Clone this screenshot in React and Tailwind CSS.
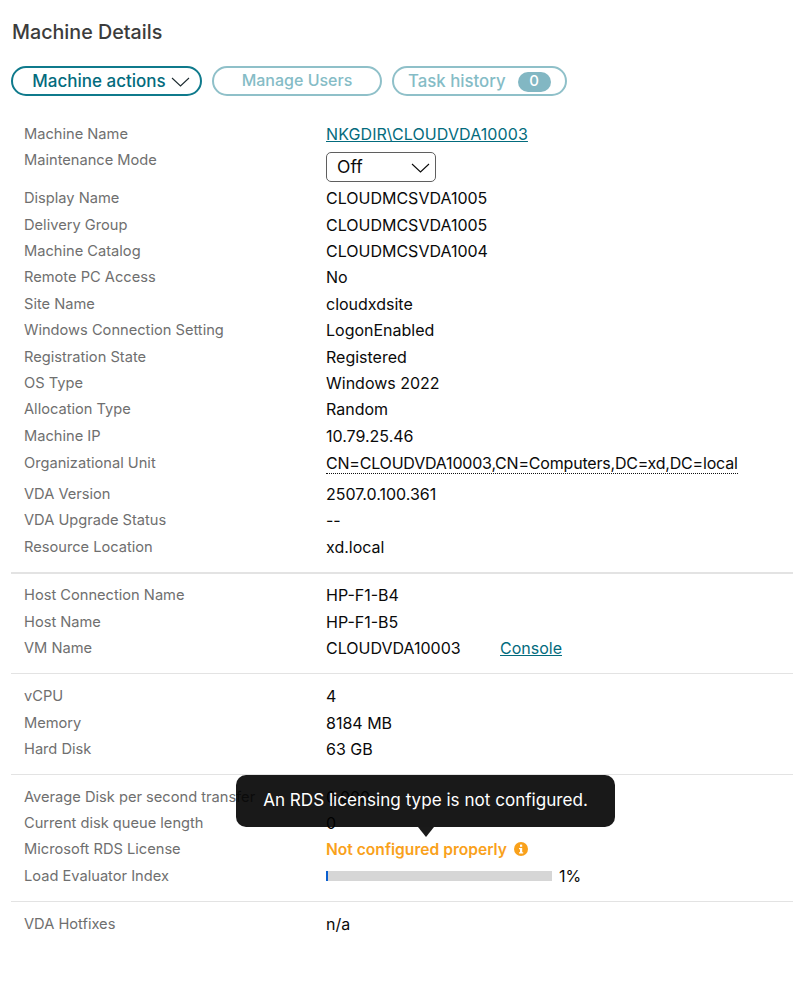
import React from "react";

const Row = ({ label, children, className = "h-[26.4px]" }) => (
  <div className={`flex items-center ${className}`}>
    <div className="w-[302px] shrink-0 pt-[2px] text-[14.65px] text-[#6f6f6f] whitespace-nowrap">{label}</div>
    <div className="text-[16px] text-[#0a0a0a] whitespace-nowrap flex items-center">{children}</div>
  </div>
);

const Section = ({ children, className = "" }) => (
  <div className={`pl-[13px] border-[#e3e3e3] ${className}`}>{children}</div>
);

const Chevron = ({ w = 19, h = 10, className = "" }) => (
  <svg width={w} height={h} viewBox="0 0 19 10" fill="none" className={className}>
    <path d="M1 1l8.5 8L18 1" stroke="currentColor" strokeWidth="1.1" />
  </svg>
);

export default function App() {
  return (
    <div className="w-[793px] h-[1004px] bg-white pl-[11px] overflow-hidden" style={{ fontFamily: "Inter, 'Liberation Sans', sans-serif" }}>
      <h1 className="pt-[20px] h-[66px] pl-[1px] text-[19.7px] leading-[24px] font-medium text-[#3c3c3c]">Machine Details</h1>

      <div className="flex gap-[10px] h-[30px]">
        <button className="w-[191px] h-[30px] rounded-full border-2 border-[#0f7a8c] text-[#036b7d] text-[17px] font-medium flex items-center justify-center gap-[5px] pl-[9px] pt-[1px]">
          Machine actions <Chevron className="text-[#1d2b30] mt-[1px]" />
        </button>
        <button className="w-[170px] h-[30px] rounded-full border-2 border-[#8fc0c9] text-[#85bcc6] text-[16px] font-medium pb-[3px]">Manage Users</button>
        <button className="w-[175px] h-[30px] rounded-full border-2 border-[#8fc0c9] text-[#85bcc6] text-[16.8px] font-medium flex items-center pl-[14px] pt-[1px]">
          Task history
          <span className="ml-[12px] w-[33px] h-[20px] rounded-full bg-[#82b7c3] text-white text-[15px] flex items-center justify-center">0</span>
        </button>
      </div>

      <Section className="pt-[25px] pb-[12px] border-b-2">
        <Row label="Machine Name"><a className="underline text-[#036b7d] tracking-[0.1px]">NKGDIR\CLOUDVDA10003</a></Row>
        <div className="flex h-[37.6px]">
          <div className="w-[302px] shrink-0 pt-[2px] text-[14.65px] text-[#6f6f6f] h-[26px] flex items-center">Maintenance Mode</div>
          <div className="mt-[5px] w-[110px] h-[30px] border border-[#5f5f5f] rounded-[5px] flex items-center justify-between pl-[10px] pr-[5px] text-[17.5px] text-[#0a0a0a]">
            Off <Chevron className="mt-[1px]" />
          </div>
        </div>
        <Row label="Display Name">CLOUDMCSVDA1005</Row>
        <Row label="Delivery Group">CLOUDMCSVDA1005</Row>
        <Row label="Machine Catalog">CLOUDMCSVDA1004</Row>
        <Row label="Remote PC Access">No</Row>
        <Row label="Site Name">cloudxdsite</Row>
        <Row label="Windows Connection Setting">LogonEnabled</Row>
        <Row label="Registration State">Registered</Row>
        <Row label="OS Type">Windows 2022</Row>
        <Row label="Allocation Type">Random</Row>
        <Row label="Machine IP" className="h-[27.4px]">10.79.25.46</Row>
        <Row label="Organizational Unit" className="h-[31px] pb-[4px]">
          <span className="border-b border-dotted border-[#111] leading-[20px] tracking-[-0.2px]">CN=CLOUDVDA10003,CN=Computers,DC=xd,DC=local</span>
        </Row>
        <Row label="VDA Version">2507.0.100.361</Row>
        <Row label="VDA Upgrade Status">--</Row>
        <Row label="Resource Location">xd.local</Row>
      </Section>

      <Section className="pt-[8px] pb-[12px] border-b">
        <Row label="Host Connection Name">HP-F1-B4</Row>
        <Row label="Host Name">HP-F1-B5</Row>
        <Row label="VM Name">
          <span className="w-[174px]">CLOUDVDA10003</span>
          <a className="underline text-[#036b7d]">Console</a>
        </Row>
      </Section>

      <Section className="pt-[9px] pb-[12px] border-b">
        <Row label="vCPU">4</Row>
        <Row label="Memory">8184 MB</Row>
        <Row label="Hard Disk">63 GB</Row>
      </Section>

      <Section className="relative pt-[8px] pb-[12px] border-b">
        <Row label="Average Disk per second transfer">0.000</Row>
        <Row label="Current disk queue length">0</Row>
        <Row label="Microsoft RDS License">
          <span className="text-[#f9a11b] font-semibold text-[15.6px] pt-[1px]">Not configured properly</span>
          <svg width="14" height="14" viewBox="0 0 14 14" className="ml-[7px]">
            <circle cx="7" cy="7" r="7" fill="#f9a11b" />
            <rect x="6" y="2.6" width="2.2" height="2.2" fill="#fff" />
            <path d="M5 6h3.2v4.2h1v1.2H5v-1.2h1V7.2H5z" fill="#fff" />
          </svg>
        </Row>
        <Row label="Load Evaluator Index">
          <span className="relative w-[226px] h-[10px] bg-[#d6d6d6] mr-[7px]">
            <span className="absolute left-0 top-0 h-full w-[2px] bg-[#0a5fd0]" />
          </span>
          1%
        </Row>
        <div className="absolute left-[225px] top-[0px] w-[379px] h-[52px] pb-[3px] rounded-[10px] bg-black/90 text-white text-[17.1px] flex items-center justify-center whitespace-nowrap">
          An RDS licensing type is not configured.
          <span className="absolute left-[182px] top-[52px] w-0 h-0 border-x-[8px] border-x-transparent border-t-[10px] border-t-[#1a1a1a]" />
        </div>
      </Section>

      <div className="pl-[13px] pt-[9px]">
        <Row label="VDA Hotfixes">n/a</Row>
      </div>
    </div>
  );
}
